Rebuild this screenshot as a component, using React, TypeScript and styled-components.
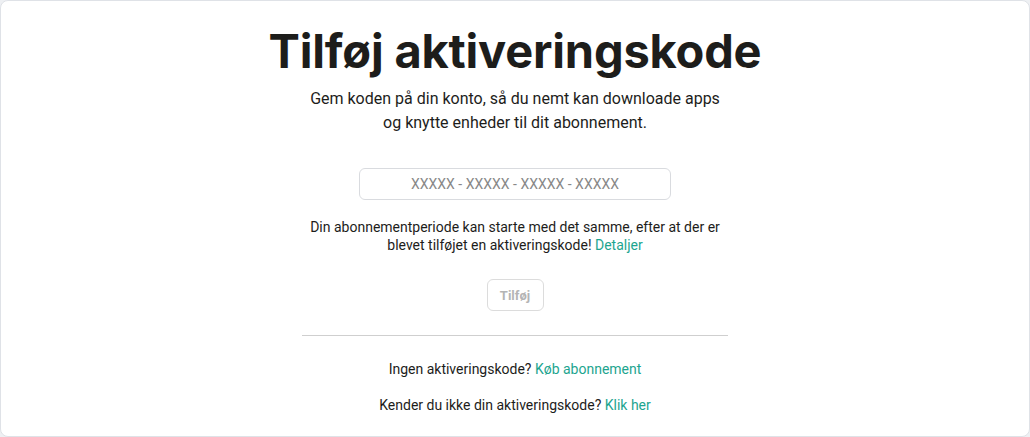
import React from 'react';
import styled, { createGlobalStyle } from 'styled-components';

const GlobalStyle = createGlobalStyle`
  html, body {
    margin: 0;
    padding: 0;
    background: #eef0f3;
  }
  body {
    font-family: Roboto, "Noto Sans", sans-serif;
    color: #1d1d1b;
  }
`;

export const Card = styled.div`
  box-sizing: border-box;
  width: 1030px;
  height: 437px;
  background: #fff;
  border: 1px solid #dfe2e7;
  border-radius: 8px;
  display: flex;
  flex-direction: column;
  align-items: center;
  padding-top: 22px;
  overflow: hidden;
`;

export const Title = styled.h1`
  margin: 0;
  font-family: Inter, "Noto Sans", sans-serif;
  font-size: 47px;
  font-weight: 700;
  line-height: 56px;
  letter-spacing: -0.2px;
`;

export const Lead = styled.p`
  margin: 8px 0 0;
  font-size: 16px;
  line-height: 24px;
  text-align: center;
  font-weight: 400;
`;

export const CodeInput = styled.input`
  box-sizing: border-box;
  margin-top: 33px;
  width: 312px;
  height: 32px;
  border: 1px solid #d9dbdf;
  border-radius: 6px;
  text-align: center;
  font-family: inherit;
  font-size: 14px;
  outline: none;
  &::placeholder {
    color: #888;
  }
`;

export const Notice = styled.p`
  margin: 18px 0 0;
  width: 420px;
  font-size: 14px;
  line-height: 18px;
  text-align: center;
`;

export const Link = styled.a`
  color: #1da58f;
  text-decoration: none;
`;

export const AddButton = styled.button`
  box-sizing: border-box;
  margin-top: 25px;
  width: 57px;
  height: 32px;
  border: 1px solid #dcdcdc;
  border-radius: 6px;
  background: #fff;
  color: #b4b4b4;
  font-family: inherit;
  font-size: 13px;
  font-weight: 700;
`;

export const Divider = styled.hr`
  margin: 24px 0 0;
  width: 426px;
  border: 0;
  border-top: 1px solid #cfcfcf;
`;

export const Help = styled.div`
  margin-top: 24px;
  display: flex;
  flex-direction: column;
  align-items: center;
  gap: 17px;
`;

export const HelpLine = styled.p`
  margin: 0;
  font-size: 14px;
  line-height: 19px;
`;

export default function App() {
  return (
    <>
      <GlobalStyle />
      <Card>
        <Title>Tilføj aktiveringskode</Title>
        <Lead>
          Gem koden på din konto, så du nemt kan downloade apps
          <br />
          og knytte enheder til dit abonnement.
        </Lead>
        <CodeInput placeholder="XXXXX - XXXXX - XXXXX - XXXXX" />
        <Notice>
          Din abonnementperiode kan starte med det samme, efter at der er blevet tilføjet en
          aktiveringskode! <Link href="#">Detaljer</Link>
        </Notice>
        <AddButton disabled>Tilføj</AddButton>
        <Divider />
        <Help>
          <HelpLine>
            Ingen aktiveringskode? <Link href="#">Køb abonnement</Link>
          </HelpLine>
          <HelpLine>
            Kender du ikke din aktiveringskode? <Link href="#">Klik her</Link>
          </HelpLine>
        </Help>
      </Card>
    </>
  );
}
